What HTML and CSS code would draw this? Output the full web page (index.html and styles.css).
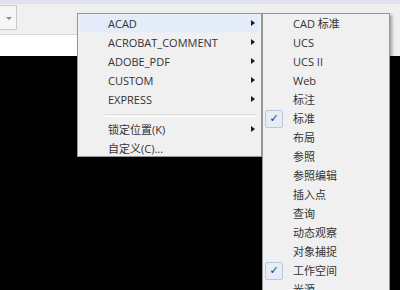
FILE: index.html
```html
<!DOCTYPE html>
<html lang="zh-CN">
<head>
    <meta charset="UTF-8">
    <title>toolbar menu</title>
    <link rel="stylesheet" href="styles.css">
</head>
<body>
    <div id="app">
        <div class="titlebar"></div>
        <div class="toolbar">
            <div class="combo"><span class="combo-arrow"></span></div>
        </div>
        <div class="cmdline"></div>
        <div class="canvas"></div>

        <div class="menu menu-main">
            <div class="item active">ACAD<span class="sub"></span></div>
            <div class="item">ACROBAT_COMMENT<span class="sub"></span></div>
            <div class="item">ADOBE_PDF<span class="sub"></span></div>
            <div class="item">CUSTOM<span class="sub"></span></div>
            <div class="item">EXPRESS<span class="sub"></span></div>
            <div class="sep"></div>
            <div class="item">锁定位置(K)<span class="sub"></span></div>
            <div class="item">自定义(C)...</div>
        </div>

        <div class="menu menu-acad">
            <div class="item">CAD 标准</div>
            <div class="item">UCS</div>
            <div class="item">UCS II</div>
            <div class="item">Web</div>
            <div class="item">标注</div>
            <div class="item checked"><span class="check">✓</span>标准</div>
            <div class="item">布局</div>
            <div class="item">参照</div>
            <div class="item">参照编辑</div>
            <div class="item">插入点</div>
            <div class="item">查询</div>
            <div class="item">动态观察</div>
            <div class="item">对象捕捉</div>
            <div class="item checked"><span class="check">✓</span>工作空间</div>
            <div class="item">光源</div>
        </div>
    </div>
</body>
</html>
```

FILE: styles.css
```css
body{
    margin: 0;
    font-family: "Open Sans", "Noto Sans CJK SC", sans-serif;
    font-size: 11px;
    color: #333333;
}
#app{
    position: relative;
    width: 400px;
    height: 290px;
    overflow: hidden;
    background-color: #f0f0f0;
}
.titlebar{
    height: 4px;
    background-color: #dfe3ef;
}
.toolbar{
    height: 29px;
}
.combo{
    width: 16px;
    height: 23px;
    margin-top: 1px;
    border: 1px solid #c9c9c9;
    border-left: none;
    background-color: #f6f6f6;
    position: relative;
}
.combo-arrow{
    position: absolute;
    left: 6px;
    top: 11px;
    border-left: 3px solid transparent;
    border-right: 3px solid transparent;
    border-top: 3px solid #8a8a8a;
}
.cmdline{
    width: 250px;
    height: 21px;
    background-color: #fff;
    border-top: 1px solid #d6d6d6;
}
.canvas{
    height: 235px;
    background-color: #000;
}

/* popup menus */
.menu{
    position: absolute;
    top: 13px;
    background-color: #f0f0f0;
    border: 1px solid #979797;
    padding: 0 2px;
    box-shadow: 2px 2px 3px rgba(0,0,0,0.35);
}
.menu-main{
    left: 77px;
    width: 179px;
    height: 142px;
}
.menu-acad{
    left: 262px;
    width: 122px;
    height: 300px;
}
.item{
    position: relative;
    height: 19px;
    line-height: 19px;
    padding-left: 28px;
    white-space: nowrap;
}
.item.active{
    background-color: #e3ecf8;
    box-shadow: inset 0 0 0 1px #e8eff9;
}
.sub{
    position: absolute;
    right: 4px;
    top: 6px;
    border-top: 3.5px solid transparent;
    border-bottom: 3.5px solid transparent;
    border-left: 4px solid #1a1a1a;
}
.sep{
    height: 1px;
    margin: 5px 2px 3px 25px;
    border-top: 1px solid #e0e0e0;
    border-bottom: 1px solid #ffffff;
}
.check{
    position: absolute;
    left: 0;
    top: 1px;
    width: 16px;
    height: 16px;
    line-height: 16px;
    text-align: center;
    background-color: #e6edf7;
    border: 1px solid #b8c8df;
    border-radius: 2px;
    color: #1d3766;
    font-family: "DejaVu Sans", sans-serif;
    font-size: 11px;
}
```
